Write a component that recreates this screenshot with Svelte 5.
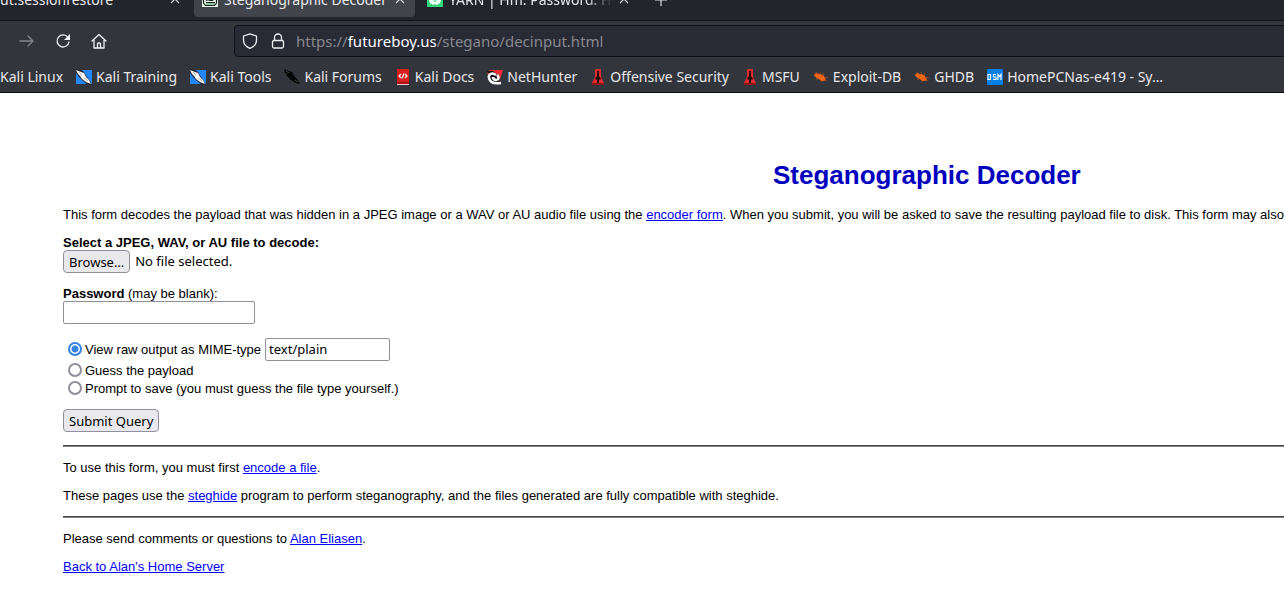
<script>
  let mode = $state('raw');
  let mime = $state('text/plain');
  let password = $state('');
  let picker;
  let files = $state();
  const bookmarks = [
    ['Kali Linux', 'dragon'], ['Kali Training', 'dragon'], ['Kali Tools', 'dragon'],
    ['Kali Forums', 'forum'], ['Kali Docs', 'docs'], ['NetHunter', 'hunter'],
    ['Offensive Security', 'tower'], ['MSFU', 'tower'], ['Exploit-DB', 'bug'],
    ['GHDB', 'bug'], ['HomePCNas-e419 - Sy…', 'dsm']
  ];
</script>

{#snippet close()}
  <svg class="close" viewBox="0 0 10 10" aria-hidden="true"><path d="M1 1l8 8M9 1L1 9" /></svg>
{/snippet}

{#snippet icon(kind)}
  <svg class="fav" viewBox="0 0 16 16" aria-hidden="true">
    {#if kind === 'dragon'}
      <path fill="#2486fb" d="M0 1h16v14H0z" />
      <path fill="#23262e" d="M0 0h4l4 3 3 5 3 4 2 4h-4l-5-4-4-4-3-4z" />
      <path fill="#fff" d="M0 1l5 2 3 1 2 4 3 3 2 4-5-2-4-3-2-3-2-2z" />
      <path stroke="#777" stroke-width=".6" fill="none" d="M3 3l3 3M8 9l4 3" />
    {:else if kind === 'forum'}
      <path fill="#050505" d="M0 0l5 2 3 1 2 4 3 3 3 5-2 0-4-2-3-2-3-3-2-2 1-1-3-2 1-1z" />
      <path stroke="#666" stroke-width=".7" fill="none" d="M2 2l3 2M11 11l3 2" />
    {:else if kind === 'docs'}
      <path fill="#d91c1c" d="M2 0h12v13H2z" />
      <path fill="#f6c8c5" d="M2 15h12v1H2z" />
      <path fill="#a81218" d="M2 13h12v2H2z" />
      <path stroke="#fff" stroke-width="1.200" fill="none" d="M6 5L4 7l2 2M10 5l2 2-2 2M9 4.500l-2 5" />
    {:else if kind === 'hunter'}
      <path fill="#f12b35" d="M2 1h14l-4 12-3-6-4-3-5 1z" />
      <path fill="#111" d="M0 2l6 0 5 4 2 5-2 3-6-5z" />
      <path fill="none" stroke="#fff" stroke-width="2.500" d="M9 6C5 3 1 5 2 9c1 5 6 6 12 5M10 6c2 2 2 4 0 5M6 8c0 2 2 3 4 3" />
    {:else if kind === 'tower'}
      <path fill="#e52a32" d="M5 0h6v8l3 6v2H2v-2l3-6z" />
      <path fill="#220b0d" d="M7 2h2v5l2 3-2 1v3H7v-3l-2-1 2-3z" />
      <path fill="#8b171b" d="M2 14h12v2H2z" />
    {:else if kind === 'bug'}
      <path fill="#f26616" d="M1 6c1-2 3-2 5-1 4 0 6 3 7 6-3 2-6 1-7-1-2 0-4-2-5-4z" />
      <path stroke="#bd521b" stroke-width=".7" fill="none" d="M3 3l2 3M7 3l1 3M11 4l-1 3M12 8l3 1M3 11l3-2M8 13l1-2M12 11l2 1" />
    {:else}
      <rect width="16" height="16" rx="1" fill="#087eea" />
      <path stroke="#fff" stroke-width="1.200" fill="none" d="M1 5.500h2.500v5H1zM9 5.500H6.500V8H9v2.500H6M11 11V5.500l1.500 2 1.500-2V11" />
    {/if}
  </svg>
{/snippet}

<header>
  <nav class="tabs" aria-label="Tabs">
    <div class="tab first"><span>ut.sessionrestore</span>{@render close()}</div>
    <div class="tab active">
      <svg class="fav" viewBox="0 0 16 16" aria-hidden="true">
        <path fill="#e7f6e9" d="M0 0h16v16H0z" />
        <path fill="#91c6a1" d="M4 12h9v2H4z" />
        <path fill="none" stroke="#142018" stroke-width="1.200" d="M1.500 0v12l2 2.500h9l2-2.500V0M4 11.500h9M4 9.500l2-1 2 1h2l2-1" />
      </svg>
      <span>Steganographic Decoder</span>{@render close()}
    </div>
    <div class="tab third">
      <svg class="fav" viewBox="0 0 16 16" aria-hidden="true">
        <path fill="#31d67b" d="M0 0h16v16H0z" />
        <path fill="#fff" d="M2 5h12v4l-1 3-2 1-1 1-2-1-2 1-1-1-2-1-1-3z" />
        <path stroke="#31d67b" fill="none" d="M6 8l2 3 2-3" />
      </svg>
      <span class="fade">YARN | Hm. Password. Ho</span>{@render close()}
    </div>
    <svg class="plus" viewBox="0 0 12 12" aria-hidden="true"><path d="M6 0v12M0 6h12" /></svg>
  </nav>
  <div class="toolbar">
    <button class="tool dim" aria-label="Forward"><svg viewBox="0 0 16 16"><path d="M1 8h13M9 3l5 5-5 5" /></svg></button>
    <button class="tool" aria-label="Reload"><svg viewBox="0 0 16 16"><path d="M13 4.500A6 6 0 1 0 14 9" /><path class="solid" d="M15 1v6H9z" /></svg></button>
    <button class="tool" aria-label="Home"><svg viewBox="0 0 16 16"><path d="M1 8l7-6.500L15 8M3 7v8h10V7M6.500 15v-4q0-1 1-1h1q1 0 1 1v4" /></svg></button>
    <div class="url">
      <svg viewBox="0 0 16 16" aria-hidden="true"><path d="M8 .8l6.500 2.200v4c0 4-3 7-6.500 8.300C4.500 14 1.500 11 1.500 7V3z" /></svg>
      <svg viewBox="0 0 16 16" aria-hidden="true"><rect x="2.500" y="7.500" width="11" height="7.500" rx="1.500" /><path d="M4.500 7V4.500a3.500 3.500 0 0 1 7 0V7" /></svg>
      <span>https://<b>futureboy.us</b>/stegano/decinput.html</span>
    </div>
  </div>
  <nav class="bookmarks" aria-label="Bookmarks">
    {#each bookmarks as [name, kind], i}
      <a href="#top">{#if i > 0}{@render icon(kind)}{/if}<span>{name}</span></a>
    {/each}
  </nav>
</header>

<main>
  <div class="page">
    <h1>Steganographic Decoder</h1>
    <p class="intro">This form decodes the payload that was hidden in a JPEG image or a WAV or AU audio file using the <a href="#encoder">encoder form</a>. When you submit, you will be asked to save the resulting payload file to disk. This form may also</p>
    <form onsubmit={(e) => e.preventDefault()}>
      <div class="field">
        <label for="file"><b>Select a JPEG, WAV, or AU file to decode:</b></label>
        <div class="filerow">
          <input id="file" type="file" hidden bind:this={picker} bind:files />
          <button type="button" onclick={() => picker.click()}>Browse…</button>
          <span>{files?.[0]?.name ?? 'No file selected.'}</span>
        </div>
      </div>
      <div class="field">
        <label for="password"><b>Password</b> (may be blank):</label>
        <input id="password" type="password" bind:value={password} />
      </div>
      <div class="options">
        <div class="option tall">
          <input id="raw" type="radio" value="raw" bind:group={mode} />
          <label for="raw">View raw output as MIME-type</label>
          <input class="mime" type="text" aria-label="MIME-type" bind:value={mime} />
        </div>
        <div class="option">
          <input id="guess" type="radio" value="guess" bind:group={mode} />
          <label for="guess">Guess the payload</label>
        </div>
        <div class="option">
          <input id="save" type="radio" value="save" bind:group={mode} />
          <label for="save">Prompt to save (you must guess the file type yourself.)</label>
        </div>
      </div>
      <button type="submit">Submit Query</button>
    </form>
    <hr />
    <p>To use this form, you must first <a href="#encode">encode a file</a>.</p>
    <p>These pages use the <a href="#steghide">steghide</a> program to perform steganography, and the files generated are fully compatible with steghide.</p>
    <hr />
    <p>Please send comments or questions to <a href="#mail">Alan Eliasen</a>.</p>
    <p><a href="#home">Back to Alan's Home Server</a></p>
  </div>
</main>

<style>
  :global(body) { margin: 0; background: #fff; overflow: hidden; }
  header { font: 14px/20px "Noto Sans", sans-serif; color: #e8e8ea; background: #33353c; border-bottom: 1px solid #0c0c0e; white-space: nowrap; overflow: hidden; }
  svg { display: block; flex: none; }
  .fav { width: 16px; height: 16px; }
  .tabs { display: flex; align-items: flex-end; height: 17px; padding-bottom: 3px; overflow: hidden; background: #23252d; border-bottom: 1px solid #15161a; }
  .tab { box-sizing: border-box; height: 36px; display: flex; align-items: center; gap: 6px; padding: 0 10px 0 8px; border-radius: 4px; flex: none; }
  .tab span { flex: 1; overflow: hidden; padding-top: 2px; }
  .first { width: 190px; padding-left: 0; margin-right: 4px; }
  .active { width: 221px; background: #42444c; }
  .third { width: 224px; padding-left: 12px; }
  .fade { mask-image: linear-gradient(90deg, #000 84%, transparent); }
  .close { width: 10px; height: 10px; }
  .plus { width: 12px; height: 12px; margin: 0 16px 11px; }
  .close path, .plus path { stroke: #e0e0e2; stroke-width: 1.2; fill: none; }
  .toolbar { display: flex; align-items: center; padding-top: 4px; padding-left: 19px; }
  .tool { width: 16px; height: 16px; padding: 0; margin-right: 20px; border: 0; background: none; color: #f2f2f4; }
  .tool.dim { color: #85868b; }
  .tool svg, .url svg { width: 16px; height: 16px; fill: none; stroke: currentColor; stroke-width: 1.3; stroke-linejoin: round; stroke-linecap: round; }
  .tool .solid { fill: currentColor; stroke: none; }
  .url { flex: 1; display: flex; align-items: center; gap: 12px; height: 30px; margin-left: 107px; margin-right: -8px; padding-left: 7px; border: 1px solid #101114; border-radius: 4px; background: #282a35; color: #f0f0f2; font-size: 15px; }
  .url span { color: #88888f; margin-left: -2px; }
  .url b { font-weight: 400; color: #fbfbfe; }
  .bookmarks { display: flex; align-items: center; gap: 13px; height: 31px; padding-top: 4px; }
  .bookmarks a { display: flex; align-items: center; gap: 4px; color: inherit; text-decoration: none; }

  main { padding: 67px 0 0 63px; overflow: hidden; font: 13px/15px "Liberation Sans", Arial, sans-serif; color: #000; }
  .page { width: 141.5%; }
  h1 { margin: 0 0 17px; font-size: 26px; line-height: 30px; text-align: center; color: #0000bf; }
  p { margin: 0 0 13px; white-space: nowrap; }
  p a { color: #0000ff; }
  form { display: flex; flex-direction: column; align-items: flex-start; gap: 13px; }
  .field { display: flex; flex-direction: column; align-items: flex-start; }
  .filerow { display: flex; align-items: center; gap: 5px; font: 13px/17px "Noto Sans", sans-serif; }
  button[type="button"], button[type="submit"] { box-sizing: border-box; height: 23px; padding: 1px 5px 0; border: 1px solid #8f8f9d; border-radius: 4px; background: #e9e9ed; color: #000; font: 13px/17px "Noto Sans", sans-serif; }
  input[type="password"], .mime { box-sizing: border-box; height: 23px; margin: 0; padding: 0 3px; border: 1px solid #8f8f9d; border-radius: 2px; background: #fff; color: #000; font: 13px/17px "Noto Sans", sans-serif; }
  input[type="password"] { width: 192px; }
  .mime { width: 125px; margin-left: 1px; }
  .options { padding-left: 5px; margin-bottom: -1px; }
  .option { display: flex; align-items: center; gap: 3px; height: 18px; }
  .option.tall { height: 24px; }
  input[type="radio"] { appearance: none; box-sizing: border-box; width: 14px; height: 14px; margin: 0; border: 2px solid #8f8f9d; border-radius: 50%; background: #fff; }
  input[type="radio"]:checked { border-color: #3584e4; background: radial-gradient(circle, #3584e4 3px, #fff 4px); }
  hr { margin: 13px 0; border: 0; border-top: 1px solid #4a4a4a; border-bottom: 1px solid #808080; }
</style>
